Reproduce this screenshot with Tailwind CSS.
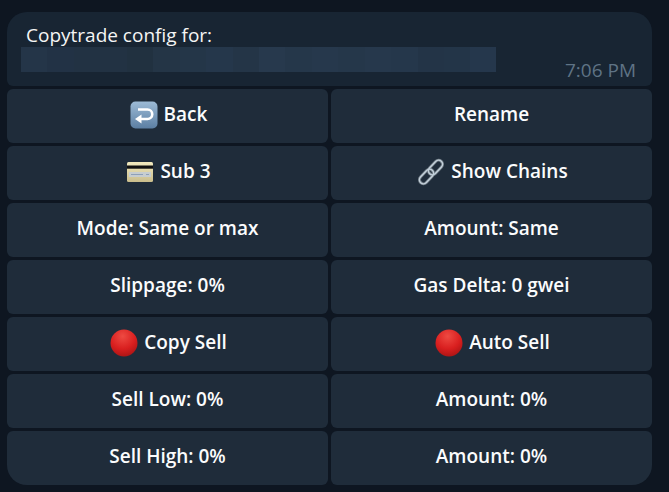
<!DOCTYPE html>
<html lang="en">
<head>
    <meta charset="UTF-8">
    <title>Copytrade config</title>
    <script src="https://cdn.jsdelivr.net/npm/@tailwindcss/browser@4"></script>
</head>
<body class="bg-[#0e1621] w-[669px] h-[492px] overflow-hidden font-['Open_Sans',sans-serif] text-white">
    <div class="w-[645px] ml-[7px] pt-[12px] flex flex-col">
        <!-- message bubble -->
        <div class="relative h-[74px] bg-[#182533] rounded-t-[20px] rounded-b-[6px] pt-[11px] mb-[3px]">
            <p class="pl-[19px] text-[19px] leading-[24px] text-[#f5f5f5]">Copytrade config for:</p>
            <div class="ml-[14px] w-[475px] h-[25px] flex">
                <div class="w-[28px] bg-[#243548]"></div>
                <div class="w-[28px] bg-[#223245]"></div>
                <div class="w-[56px] bg-[#223243]"></div>
                <div class="w-[28px] bg-[#213140]"></div>
                <div class="w-[28px] bg-[#243546]"></div>
                <div class="w-[28px] bg-[#243648]"></div>
                <div class="w-[28px] bg-[#25374b]"></div>
                <div class="w-[28px] bg-[#243547]"></div>
                <div class="w-[28px] bg-[#27394d]"></div>
                <div class="w-[28px] bg-[#25374a]"></div>
                <div class="w-[28px] bg-[#26384c]"></div>
                <div class="w-[28px] bg-[#25374a]"></div>
                <div class="w-[28px] bg-[#26384c]"></div>
                <div class="w-[28px] bg-[#25374b]"></div>
                <div class="w-[28px] bg-[#233447]"></div>
                <div class="w-[28px] bg-[#233548]"></div>
                <div class="w-[27px] bg-[#25374c]"></div>
                <div class="flex-1 bg-[#213142]"></div>
            </div>
            <span class="absolute right-[16px] bottom-[6px] text-[19px] leading-[20px] text-[#5f7385]">7:06 PM</span>
        </div>
        <!-- keyboard -->
        <div class="grid grid-cols-[321px_321px] gap-[3px] auto-rows-[54px] font-semibold text-[19px] text-[#fbfcfd]">
            <button class="bg-[#1f2c3a] rounded-[6px] flex items-center justify-center gap-[6px] pb-[3px] pl-[2px]">
                <svg class="w-[28px] h-[28px]" viewBox="0 0 28 28">
                    <defs><linearGradient id="b" x1="0" y1="0" x2="0" y2="1"><stop offset="0" stop-color="#9dbbd6"/><stop offset="1" stop-color="#5c7fa3"/></linearGradient></defs>
                    <rect x="0.5" y="0.5" width="27" height="27" rx="5" fill="url(#b)"/>
                    <path d="M8 8.5h9.5a4.5 4.5 0 0 1 0 9.5H9" fill="none" stroke="#fff" stroke-width="2.6"/>
                    <path d="M11.5 13.5v9L5 18z" fill="#fff"/>
                </svg>
                <span>Back</span>
            </button>
            <button class="bg-[#1f2c3a] rounded-[6px] pb-[3px]">Rename</button>

            <button class="bg-[#1f2c3a] rounded-[6px] flex items-center justify-center gap-[6px] pb-[3px] pl-[2px]">
                <svg class="w-[28px] h-[28px]" viewBox="0 0 28 28">
                    <defs><linearGradient id="c" x1="0" y1="0" x2="0" y2="1"><stop offset="0" stop-color="#f2eabf"/><stop offset="1" stop-color="#c9bd8c"/></linearGradient></defs>
                    <rect x="1" y="4" width="26" height="20" rx="1.5" fill="url(#c)"/>
                    <rect x="1" y="7.5" width="26" height="3.2" fill="#111"/>
                    <rect x="3" y="14" width="22" height="5" fill="#c6cdd0"/>
                    <path d="M5 16.5h12M20 16.5h3" stroke="#8ea0b8" stroke-width="1.2"/>
                </svg>
                <span>Sub 3</span>
            </button>
            <button class="bg-[#1f2c3a] rounded-[6px] flex items-center justify-center gap-[6px] pb-[3px] pl-[2px]">
                <svg class="w-[28px] h-[28px]" viewBox="0 0 28 28" fill="none">
                    <g stroke="#6f7a84" stroke-width="3">
                        <rect x="-8.5" y="-4" width="17" height="8" rx="4" transform="translate(9.5 18.5) rotate(-47)"/>
                        <rect x="-8.5" y="-4" width="17" height="8" rx="4" transform="translate(18.5 9.5) rotate(-47)"/>
                    </g>
                    <g stroke="#c3d0da" stroke-width="1.4">
                        <rect x="-8.5" y="-4" width="17" height="8" rx="4" transform="translate(9.5 18.5) rotate(-47)"/>
                        <rect x="-8.5" y="-4" width="17" height="8" rx="4" transform="translate(18.5 9.5) rotate(-47)"/>
                    </g>
                </svg>
                <span>Show Chains</span>
            </button>

            <button class="bg-[#1f2c3a] rounded-[6px] pb-[3px]">Mode: Same or max</button>
            <button class="bg-[#1f2c3a] rounded-[6px] pb-[3px]">Amount: Same</button>

            <button class="bg-[#1f2c3a] rounded-[6px] pb-[3px]">Slippage: 0%</button>
            <button class="bg-[#1f2c3a] rounded-[6px] pb-[3px]">Gas Delta: 0 gwei</button>

            <button class="bg-[#1f2c3a] rounded-[6px] flex items-center justify-center gap-[6px] pb-[3px] pl-[2px]">
                <svg class="w-[28px] h-[28px]" viewBox="0 0 28 28">
                    <defs><radialGradient id="r" cx="0.45" cy="0.25" r="0.85"><stop offset="0" stop-color="#ee4a42"/><stop offset="0.55" stop-color="#d91f1f"/><stop offset="1" stop-color="#a01212"/></radialGradient></defs>
                    <circle cx="14" cy="14" r="13.5" fill="url(#r)"/>
                </svg>
                <span>Copy Sell</span>
            </button>
            <button class="bg-[#1f2c3a] rounded-[6px] flex items-center justify-center gap-[6px] pb-[3px] pl-[2px]">
                <svg class="w-[28px] h-[28px]" viewBox="0 0 28 28">
                    <circle cx="14" cy="14" r="13.5" fill="url(#r)"/>
                </svg>
                <span>Auto Sell</span>
            </button>

            <button class="bg-[#1f2c3a] rounded-[6px] pb-[3px]">Sell Low: 0%</button>
            <button class="bg-[#1f2c3a] rounded-[6px] pb-[3px]">Amount: 0%</button>

            <button class="bg-[#1f2c3a] rounded-[6px] rounded-bl-[20px] pb-[3px]">Sell High: 0%</button>
            <button class="bg-[#1f2c3a] rounded-[6px] rounded-br-[20px] pb-[3px]">Amount: 0%</button>
        </div>
    </div>
</body>
</html>
